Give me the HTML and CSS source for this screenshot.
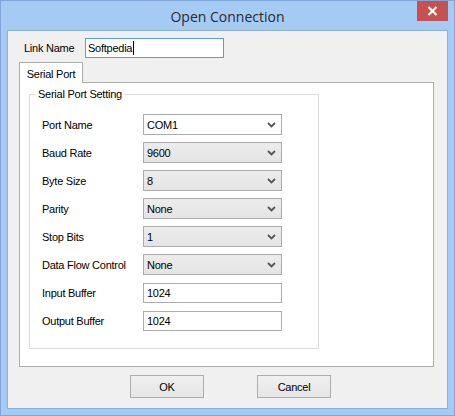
FILE: index.html
```html
<!DOCTYPE html>
<html>
<head>
<meta charset="utf-8">
<link rel="stylesheet" href="styles.css">
</head>
<body>
<div class="window">
  <div class="titlebar">
    <span class="title">Open Connection</span>
    <div class="close">
      <svg width="11" height="10" viewBox="0 0 11 10"><path d="M1.5 1 L9.5 9 M9.5 1 L1.5 9" stroke="#fff" stroke-width="2.2"/></svg>
    </div>
  </div>
  <div class="client">
    <div class="link-row">
      <span class="link-label">Link Name</span>
      <div class="textbox focused">Softpedia<span class="caret"></span></div>
    </div>
    <div class="tabs">
      <div class="tab">Serial Port</div>
    </div>
    <div class="panel">
      <div class="group">
        <span class="legend">Serial Port Setting</span>
        <div class="rows">
          <div class="row"><span class="lbl">Port Name</span><div class="combo white"><span>COM1</span><svg class="chev" width="9" height="6" viewBox="0 0 9 6"><path d="M1 1 L4.5 4.5 L8 1" fill="none" stroke="#555" stroke-width="1.8"/></svg></div></div>
          <div class="row"><span class="lbl">Baud Rate</span><div class="combo"><span>9600</span><svg class="chev" width="9" height="6" viewBox="0 0 9 6"><path d="M1 1 L4.5 4.5 L8 1" fill="none" stroke="#555" stroke-width="1.8"/></svg></div></div>
          <div class="row"><span class="lbl">Byte Size</span><div class="combo"><span>8</span><svg class="chev" width="9" height="6" viewBox="0 0 9 6"><path d="M1 1 L4.5 4.5 L8 1" fill="none" stroke="#555" stroke-width="1.8"/></svg></div></div>
          <div class="row"><span class="lbl">Parity</span><div class="combo"><span>None</span><svg class="chev" width="9" height="6" viewBox="0 0 9 6"><path d="M1 1 L4.5 4.5 L8 1" fill="none" stroke="#555" stroke-width="1.8"/></svg></div></div>
          <div class="row"><span class="lbl">Stop Bits</span><div class="combo"><span>1</span><svg class="chev" width="9" height="6" viewBox="0 0 9 6"><path d="M1 1 L4.5 4.5 L8 1" fill="none" stroke="#555" stroke-width="1.8"/></svg></div></div>
          <div class="row"><span class="lbl">Data Flow Control</span><div class="combo"><span>None</span><svg class="chev" width="9" height="6" viewBox="0 0 9 6"><path d="M1 1 L4.5 4.5 L8 1" fill="none" stroke="#555" stroke-width="1.8"/></svg></div></div>
          <div class="row"><span class="lbl">Input Buffer</span><div class="textbox field">1024</div></div>
          <div class="row"><span class="lbl">Output Buffer</span><div class="textbox field">1024</div></div>
        </div>
      </div>
    </div>
    <div class="buttons">
      <div class="btn">OK</div>
      <div class="btn">Cancel</div>
    </div>
  </div>
</div>
</body>
</html>
```
FILE: styles.css
```css
html, body {
  margin: 0;
  padding: 0;
}
body {
  width: 455px;
  height: 416px;
  overflow: hidden;
  font-family: "Liberation Sans", Arial, sans-serif;
  font-size: 11px;
  letter-spacing: -0.25px;
  color: #000;
}
.window {
  width: 455px;
  height: 416px;
  box-sizing: border-box;
  border: 1px solid #7fa6d6;
  background: #a5cbf5;
  display: flex;
  flex-direction: column;
}
.titlebar {
  height: 29px;
  position: relative;
  display: flex;
  justify-content: center;
  align-items: center;
  flex: none;
}
.title {
  font-family: "Open Sans", "Noto Sans", sans-serif;
  font-size: 14px;
  letter-spacing: 0;
  color: #2a2a2a;
  margin-top: 2px;
}
.close {
  position: absolute;
  top: 0;
  right: 6px;
  width: 31px;
  height: 20px;
  background: #c75050;
  display: flex;
  align-items: center;
  justify-content: center;
}
.client {
  flex: 1;
  margin: 0 6px 6px 6px;
  border: 1px solid #8cb0dc;
  background: #f0f0f0;
  padding: 7px 13px 0 11px;
  display: flex;
  flex-direction: column;
}
.link-row {
  display: flex;
  align-items: center;
  height: 20px;
  padding-left: 5px;
}
.link-label {
  width: 61px;
}
.textbox {
  box-sizing: border-box;
  height: 20px;
  border: 1px solid #abadb3;
  background: #fff;
  display: flex;
  align-items: center;
  padding-left: 2px;
}
.textbox.focused {
  width: 139px;
  border-color: #569de5;
}
.caret {
  width: 1px;
  height: 14px;
  background: #000;
  margin-left: 1px;
}
.tabs {
  display: flex;
  margin-top: 4px;
}
.tab {
  position: relative;
  z-index: 1;
  width: 64px;
  height: 21px;
  box-sizing: border-box;
  border: 1px solid #adadad;
  border-bottom: none;
  background: #fff;
  margin-bottom: -1px;
  display: flex;
  align-items: center;
  justify-content: center;
  padding-top: 1px;
}
.panel {
  box-sizing: border-box;
  width: 415px;
  border: 1px solid #adadad;
  background: #fff;
  padding: 11px 0 17px 9px;
}
.group {
  position: relative;
  width: 290px;
  box-sizing: border-box;
  border: 1px solid #dcdcdc;
  padding: 19px 0 17px 12px;
}
.legend {
  position: absolute;
  left: 6px;
  top: -8px;
  background: #fff;
  padding: 0 2px;
  line-height: 14px;
}
.rows {
  display: flex;
  flex-direction: column;
  gap: 7px;
}
.row {
  display: flex;
  align-items: center;
  height: 21px;
}
.lbl {
  width: 101px;
  flex: none;
}
.combo {
  box-sizing: border-box;
  width: 139px;
  height: 21px;
  border: 1px solid #acacac;
  background: linear-gradient(#ececec, #e4e4e4);
  display: flex;
  align-items: center;
  justify-content: space-between;
  padding: 0 5px 0 3px;
}
.combo.white {
  background: #fff;
}
.textbox.field {
  width: 139px;
  height: 20px;
  padding-left: 3px;
}
.buttons {
  display: flex;
  gap: 53px;
  margin-top: 8px;
  padding-left: 111px;
}
.btn {
  box-sizing: border-box;
  width: 74px;
  height: 23px;
  border: 1px solid #adadad;
  background: linear-gradient(#f0f0f0, #e5e5e5);
  display: flex;
  align-items: center;
  justify-content: center;
}
```
